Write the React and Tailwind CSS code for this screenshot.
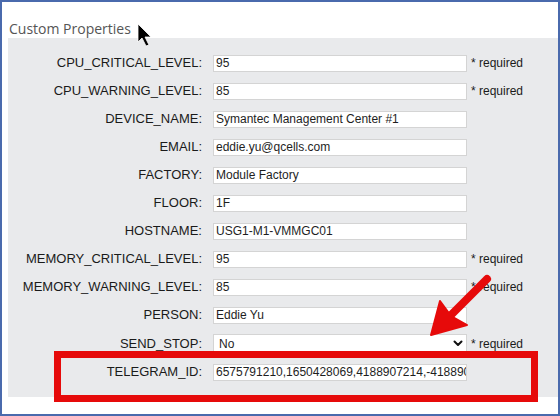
import React from 'react'

const ROWS = [
  { label: 'CPU_CRITICAL_LEVEL:', value: '95', required: true },
  { label: 'CPU_WARNING_LEVEL:', value: '85', required: true },
  { label: 'DEVICE_NAME:', value: 'Symantec Management Center #1' },
  { label: 'EMAIL:', value: 'eddie.yu@qcells.com' },
  { label: 'FACTORY:', value: 'Module Factory' },
  { label: 'FLOOR:', value: '1F' },
  { label: 'HOSTNAME:', value: 'USG1-M1-VMMGC01' },
  { label: 'MEMORY_CRITICAL_LEVEL:', value: '95', required: true },
  { label: 'MEMORY_WARNING_LEVEL:', value: '85', required: true },
  { label: 'PERSON:', value: 'Eddie Yu' },
]

const font = "font-['Liberation_Sans',Arial,sans-serif]"

function Field({ value }) {
  return (
    <input
      readOnly
      value={value}
      className={`${font} w-[254px] h-[17px] bg-white border border-[#d4d4d4] pl-[2px] pr-0 text-[12px] text-[#1e1e1e] outline-none`}
    />
  )
}

function Required() {
  return <span className="ml-[4px] text-[12px] text-[#1a1a1a]">* required</span>
}

export default function App() {
  return (
    <div className={`${font} relative w-[560px] h-[416px] bg-white border-2 border-[#4a6aad] pl-[6px] overflow-hidden`}>
      <div className="mt-[17px] h-[19px] leading-[19px] pl-[1px] text-[14px] text-[#555] font-['Open_Sans',sans-serif]">
        Custom Properties
      </div>

      <div className="bg-[#e9eaec] h-[359px] pt-[11px]">
        {ROWS.map((r) => (
          <div key={r.label} className="flex items-center h-[28px]">
            <div className="w-[194px] text-right text-[13px] text-[#1a1a1a]">{r.label}</div>
            <div className="ml-[11px] flex items-center">
              <Field value={r.value} />
              {r.required && <Required />}
            </div>
          </div>
        ))}

        <div className="flex items-center h-[29px]">
          <div className="w-[194px] text-right text-[13px] text-[#1a1a1a]">SEND_STOP:</div>
          <div className="ml-[11px] flex items-center">
            <div className="relative w-[254px] h-[19px] bg-white border border-[#d4d4d4] flex items-center pl-[5px] text-[12px] text-[#1e1e1e]">
              No
              <svg className="absolute right-[3px] top-[5px]" width="10" height="7" viewBox="0 0 10 7" fill="none">
                <path d="M1.5 1.5L5 5L8.5 1.5" stroke="#111" strokeWidth="2" strokeLinecap="round" strokeLinejoin="round" />
              </svg>
            </div>
            <Required />
          </div>
        </div>

        <div className="flex items-center h-[28px]">
          <div className="w-[194px] text-right text-[13px] text-[#1a1a1a]">TELEGRAM_ID:</div>
          <div className="ml-[11px] flex items-center">
            <Field value="6575791210,1650428069,4188907214,-4188907214" />
          </div>
        </div>
      </div>

      {/* annotation: red highlight box */}
      <div className="absolute left-[52px] top-[349px] w-[484px] h-[51px] border-[7px] border-[#e60a0a]" />

      {/* annotation: red arrow + cursor */}
      <svg className="absolute left-[-2px] top-[-2px] pointer-events-none" width="560" height="416" viewBox="0 0 560 416">
        <line x1="487" y1="279" x2="448" y2="318" stroke="#e60a0a" strokeWidth="8" strokeLinecap="round" />
        <path d="M431 335 L440 301 L451 316 L467 325 Z" fill="#e60a0a" stroke="#e60a0a" strokeWidth="2" strokeLinejoin="round" />
        <path d="M138 24 L138 42 L142 38 L146 46 L149 45 L145 37 L151 37 Z" fill="#000" stroke="#fff" strokeWidth="0.8" />
      </svg>
    </div>
  )
}
